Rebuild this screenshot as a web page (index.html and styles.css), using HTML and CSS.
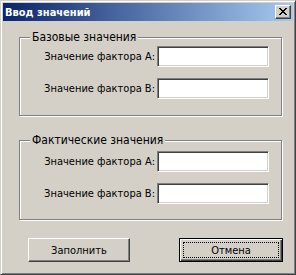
FILE: index.html
```html
<!DOCTYPE html>
<html lang="ru">
<head>
<meta charset="utf-8">
<title>Ввод значений</title>
<link rel="stylesheet" href="styles.css">
</head>
<body>
<div class="window">
  <div class="titlebar">
    <span class="title">Ввод значений</span>
    <div class="close"><svg width="8" height="7" viewBox="0 0 8 7" shape-rendering="crispEdges"><path fill="#000" d="M0 0h2v1H0zM6 0h2v1H6zM1 1h2v1H1zM5 1h2v1H5zM2 2h4v1H2zM3 3h2v1H3zM2 4h4v1H2zM1 5h2v1H1zM5 5h2v1H5zM0 6h2v1H0zM6 6h2v1H6z"/></svg></div>
  </div>
  <div class="body">
    <div class="group g1">
      <div class="legend">Базовые значения</div>
      <div class="row"><span class="label">Значение фактора А:</span><div class="input"></div></div>
      <div class="row"><span class="label">Значение фактора В:</span><div class="input"></div></div>
    </div>
    <div class="group g2">
      <div class="legend">Фактические значения</div>
      <div class="row"><span class="label">Значение фактора А:</span><div class="input"></div></div>
      <div class="row"><span class="label">Значение фактора В:</span><div class="input"></div></div>
    </div>
    <div class="buttons">
      <div class="btn fill">Заполнить</div>
      <div class="btn cancel default">Отмена<span class="focus"></span></div>
    </div>
  </div>
</div>
</body>
</html>
```
FILE: styles.css
```css
html, body {
  margin: 0;
  padding: 0;
  background: #d4d0c8;
}
.window {
  width: 296px;
  height: 275px;
  box-sizing: border-box;
  border: 1px solid;
  border-color: #d4d0c8 #404040 #404040 #d4d0c8;
  box-shadow: inset 1px 1px #fff, inset -1px -1px #808080;
  padding: 2px;
  background: #d4d0c8;
  font-family: "DejaVu Sans Condensed", "DejaVu Sans", sans-serif;
  font-size: 11px;
  color: #000;
}
.titlebar {
  height: 18px;
  display: flex;
  align-items: center;
  justify-content: space-between;
  background: linear-gradient(to right, #0a246a, #a6caf0);
  padding: 0 2px;
}
.title {
  color: #fff;
  font-weight: bold;
  font-size: 11px;
}
.close {
  width: 16px;
  height: 14px;
  box-sizing: border-box;
  background: #d4d0c8;
  border: 1px solid;
  border-color: #fff #404040 #404040 #fff;
  box-shadow: inset -1px -1px #808080;
  display: flex;
  align-items: center;
  justify-content: center;
  padding: 0 1px 1px 0;
}
.close svg { display: block; }
.body {
  display: flex;
  flex-direction: column;
  padding: 16px 0 0 16px;
}
.group {
  position: relative;
  width: 263px;
  box-sizing: border-box;
  border: 1px solid #808080;
  box-shadow: inset 1px 1px #fff, 1px 1px #fff;
  display: flex;
  flex-direction: column;
  gap: 11px;
  padding: 8px 12px 16px 0;
}
.g2 {
  margin-top: 24px;
  padding-top: 10px;
  padding-bottom: 15px;
}
.legend {
  position: absolute;
  left: 10px;
  top: -7px;
  padding: 0 2px;
  background: #d4d0c8;
  font-size: 12px;
  line-height: 13px;
}
.row {
  display: flex;
  align-items: center;
  justify-content: flex-end;
  gap: 2px;
  height: 21px;
}
.input {
  width: 112px;
  height: 21px;
  box-sizing: border-box;
  background: #fff;
  border: 1px solid;
  border-color: #808080 #fff #fff #808080;
  box-shadow: inset 1px 1px #404040, inset -1px -1px #d4d0c8;
}
.buttons {
  display: flex;
  margin-top: 18px;
  padding-left: 9px;
}
.btn {
  position: relative;
  height: 24px;
  box-sizing: border-box;
  border: 1px solid;
  border-color: #fff #404040 #404040 #fff;
  box-shadow: inset -1px -1px #808080;
  display: flex;
  align-items: center;
  justify-content: center;
}
.fill { width: 102px; }
.cancel { width: 104px; margin-left: 49px; }
.default {
  border-color: #000;
  box-shadow: inset 1px 1px #fff, inset -1px -1px #404040, inset -2px -2px #808080;
}
.focus {
  position: absolute;
  left: 3px;
  top: 3px;
  right: 3px;
  bottom: 3px;
  border: 1px dotted #000;
}
```
